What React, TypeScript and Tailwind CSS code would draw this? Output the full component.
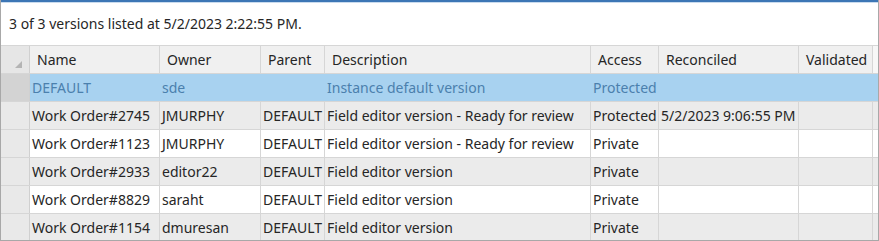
import React from "react";

const cols = [
  { key: "name", label: "Name", w: 130 },
  { key: "owner", label: "Owner", w: 101 },
  { key: "parent", label: "Parent", w: 64 },
  { key: "desc", label: "Description", w: 266 },
  { key: "access", label: "Access", w: 68 },
  { key: "rec", label: "Reconciled", w: 140 },
  { key: "val", label: "Validated", w: 74 },
];

const rows: Record<string, string>[] = [
  { name: "DEFAULT", owner: "sde", parent: "", desc: "Instance default version", access: "Protected", rec: "", val: "" },
  { name: "Work Order#2745", owner: "JMURPHY", parent: "DEFAULT", desc: "Field editor version - Ready for review", access: "Protected", rec: "5/2/2023 9:06:55 PM", val: "" },
  { name: "Work Order#1123", owner: "JMURPHY", parent: "DEFAULT", desc: "Field editor version - Ready for review", access: "Private", rec: "", val: "" },
  { name: "Work Order#2933", owner: "editor22", parent: "DEFAULT", desc: "Field editor version", access: "Private", rec: "", val: "" },
  { name: "Work Order#8829", owner: "saraht", parent: "DEFAULT", desc: "Field editor version", access: "Private", rec: "", val: "" },
  { name: "Work Order#1154", owner: "dmuresan", parent: "DEFAULT", desc: "Field editor version", access: "Private", rec: "", val: "" },
];

export default function App() {
  return (
    <div
      className="w-[879px] h-[241px] overflow-hidden bg-white text-[14px] text-[#262626] border-x border-b border-[#a8a8a8] flex flex-col"
      style={{ fontFamily: '"Noto Sans", "Open Sans", sans-serif' }}
    >
      <div className="h-[2px] bg-[#3c76b5] shrink-0" />
      <div className="h-px bg-[#c9dbee] shrink-0" />
      <div className="h-[42px] shrink-0 flex items-center pl-[8px] pb-[1px] whitespace-nowrap">
        3 of 3 versions listed at 5/2/2023 2:22:55 PM.
      </div>
      <div className="flex-1 flex flex-col border-t border-[#d6d6d6] overflow-hidden">
        <div className="flex h-[28px] shrink-0 bg-[#f0f0f0] border-b border-[#d6d6d6]">
          <div className="w-[29px] shrink-0 bg-[#e6e6e6] border-r border-[#d0d0d0] flex items-end justify-end pr-[7px] pb-[5px]">
            <svg width="7" height="7" viewBox="0 0 7 7">
              <polygon points="7,0 7,7 0,7" fill="#b4b4b4" />
            </svg>
          </div>
          {cols.map((c) => (
            <div
              key={c.key}
              className="shrink-0 border-r border-[#d6d6d6] flex items-center pl-[7px] whitespace-nowrap overflow-hidden"
              style={{ width: c.w }}
            >
              {c.label}
            </div>
          ))}
          <div className="flex-1 bg-[#f7f7f7]" />
        </div>
        {rows.map((r, i) => {
          const sel = i === 0;
          const gray = i % 2 === 1;
          const bg = sel ? "bg-[#a8d2f0]" : gray ? "bg-[#ebebeb]" : "bg-white";
          return (
            <div key={i} className={`flex h-[28px] shrink-0 border-b border-[#d6d6d6] ${bg}`}>
              <div
                className={`w-[29px] shrink-0 border-r border-[#d0d0d0] ${sel ? "bg-[#d3d3d3]" : "bg-[#e9e9e9]"}`}
              />
              {cols.map((c) => (
                <div
                  key={c.key}
                  className={`shrink-0 border-r flex items-center pl-[2px] whitespace-nowrap overflow-hidden ${
                    sel ? "text-[#4b80ad] border-[#a8d2f0]" : "border-[#d6d6d6]"
                  }`}
                  style={{ width: c.w }}
                >
                  {r[c.key]}
                </div>
              ))}
              <div className="flex-1" />
            </div>
          );
        })}
      </div>
    </div>
  );
}
